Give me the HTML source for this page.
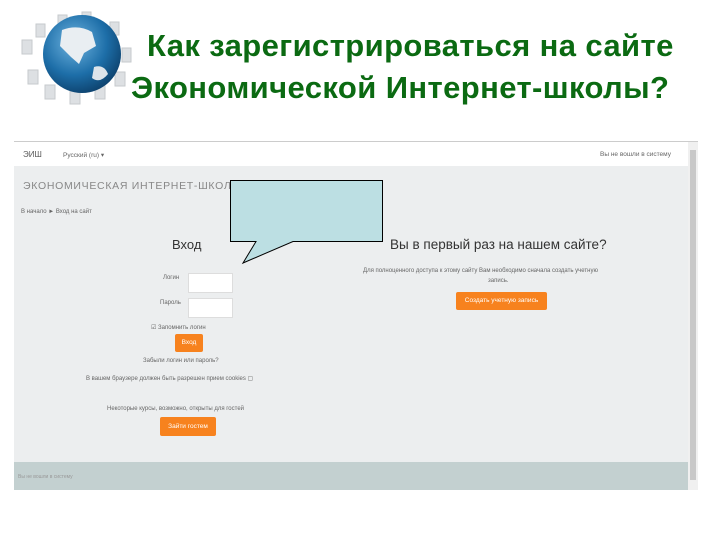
<!DOCTYPE html>
<html><head><meta charset="utf-8"><style>
*{margin:0;padding:0;box-sizing:border-box}
body{width:720px;height:540px;background:#fff;position:relative;overflow:hidden;font-family:"Liberation Sans",sans-serif}
.t{position:absolute;color:#0b6a12;font-weight:bold;font-size:31px;white-space:nowrap;letter-spacing:0.4px}
.a{position:absolute;white-space:nowrap;color:#666;font-size:7px}
.btn{position:absolute;background:#f7821e;color:#fff;font-size:6.5px;text-align:center;border-radius:2px}
.in{position:absolute;background:#fff;border:1px solid #ddd}
</style></head><body>
<svg style="position:absolute;left:0;top:0" width="140" height="120">
<defs><radialGradient id="g" cx="40%" cy="35%" r="70%"><stop offset="0" stop-color="#6fb4e0"/><stop offset="0.6" stop-color="#1d6ea8"/><stop offset="1" stop-color="#0c3f6a"/></radialGradient></defs>
<g fill="#dde0e3" stroke="#c6cacd">
<rect x="22" y="40" width="10" height="14"/><rect x="28" y="70" width="10" height="14"/><rect x="45" y="85" width="10" height="14"/><rect x="70" y="88" width="10" height="16"/><rect x="95" y="85" width="10" height="14"/><rect x="115" y="72" width="10" height="14"/><rect x="122" y="48" width="9" height="14"/><rect x="110" y="22" width="9" height="13"/><rect x="82" y="12" width="9" height="12"/><rect x="58" y="15" width="9" height="12"/><rect x="36" y="24" width="9" height="13"/>
</g>
<circle cx="82" cy="54" r="39" fill="url(#g)"/>
<path d="M62 30 Q78 24 92 32 L96 46 L84 53 L79 64 L71 57 L60 46 Z" fill="#e9eef2"/>
<path d="M94 67 Q104 64 108 74 Q100 84 92 78 Z" fill="#dde4ea"/>
</svg>
<div class="t" style="left:147px;top:28px">Как зарегистрироваться на сайте</div>
<div class="t" style="left:131px;top:70px">Экономической Интернет-школы?</div>

<div style="position:absolute;left:14px;top:141px;width:684px;height:349px;border-top:1px solid #ccc;background:#eceeef"></div>
<div style="position:absolute;left:14px;top:142px;width:674px;height:24px;background:#fff"></div>
<div style="position:absolute;left:688px;top:142px;width:10px;height:348px;background:#f0f0f0"></div>
<div style="position:absolute;left:690px;top:150px;width:6px;height:330px;background:#c8c8c8"></div>
<div style="position:absolute;left:14px;top:462px;width:674px;height:28px;background:#c3d0d0"></div>
<div class="a" style="left:23px;top:150px;font-size:8px;color:#555">ЭИШ</div>
<div class="a" style="left:63px;top:151px;font-size:6.5px">Русский (ru) ▾</div>
<div class="a" style="left:600px;top:151px;font-size:6.5px">Вы не вошли в систему</div>
<div class="a" style="left:23px;top:180px;font-size:10.5px;color:#888;letter-spacing:0.7px">ЭКОНОМИЧЕСКАЯ ИНТЕРНЕТ-ШКОЛА НО</div>
<div class="a" style="left:21px;top:209px;font-size:6px">В начало ► Вход на сайт</div>
<div class="a" style="left:172px;top:237px;font-size:13px;color:#333">Вход</div>
<div class="a" style="left:390px;top:237px;font-size:13.5px;color:#333">Вы в первый раз на нашем сайте?</div>
<div class="a" style="left:363px;top:268px;font-size:6px">Для полноценного доступа к этому сайту Вам необходимо сначала создать учетную</div>
<div class="a" style="left:488px;top:278px;font-size:6px">запись.</div>
<div class="btn" style="left:456px;top:292px;width:91px;height:18px;line-height:18px">Создать учетную запись</div>
<div class="a" style="left:163px;top:275px;font-size:6px">Логин</div>
<div class="in" style="left:188px;top:273px;width:45px;height:20px"></div>
<div class="a" style="left:160px;top:300px;font-size:6px">Пароль</div>
<div class="in" style="left:188px;top:298px;width:45px;height:20px"></div>
<div class="a" style="left:151px;top:324px;font-size:6px">☑ Запомнить логин</div>
<div class="btn" style="left:175px;top:334px;width:28px;height:18px;line-height:18px">Вход</div>
<div class="a" style="left:143px;top:358px;font-size:6px">Забыли логин или пароль?</div>
<div class="a" style="left:86px;top:375px;font-size:6px">В вашем браузере должен быть разрешен прием cookies ▢</div>
<div class="a" style="left:107px;top:406px;font-size:6px">Некоторые курсы, возможно, открыты для гостей</div>
<div class="btn" style="left:160px;top:417px;width:56px;height:19px;line-height:19px">Зайти гостем</div>
<div class="a" style="left:18px;top:474px;font-size:5px;color:#999">Вы не вошли в систему</div>
<svg style="position:absolute;left:0;top:0" width="720" height="540">
<path d="M230.5 180.5 H382.5 V241.5 H293 L243 263 L256 241.5 H230.5 Z" fill="#bcdfe3" stroke="#000" stroke-width="1"/>
</svg>
</body></html>
